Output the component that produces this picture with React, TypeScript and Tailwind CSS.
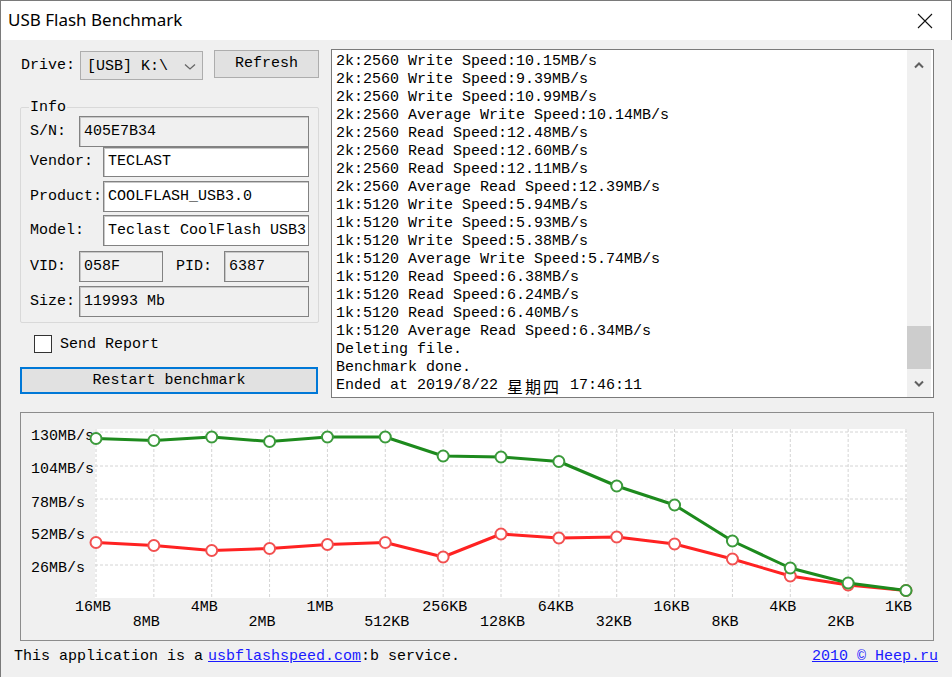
import React from "react";

const LOG = [
  "2k:2560 Write Speed:10.15MB/s",
  "2k:2560 Write Speed:9.39MB/s",
  "2k:2560 Write Speed:10.99MB/s",
  "2k:2560 Average Write Speed:10.14MB/s",
  "2k:2560 Read Speed:12.48MB/s",
  "2k:2560 Read Speed:12.60MB/s",
  "2k:2560 Read Speed:12.11MB/s",
  "2k:2560 Average Read Speed:12.39MB/s",
  "1k:5120 Write Speed:5.94MB/s",
  "1k:5120 Write Speed:5.93MB/s",
  "1k:5120 Write Speed:5.38MB/s",
  "1k:5120 Average Write Speed:5.74MB/s",
  "1k:5120 Read Speed:6.38MB/s",
  "1k:5120 Read Speed:6.24MB/s",
  "1k:5120 Read Speed:6.40MB/s",
  "1k:5120 Average Read Speed:6.34MB/s",
  "Deleting file.",
  "Benchmark done.",
];

const SIZES = ["16MB", "8MB", "4MB", "2MB", "1MB", "512KB", "256KB", "128KB", "64KB", "32KB", "16KB", "8KB", "4KB", "2KB", "1KB"];
const WRITE_Y = [542.5, 545.5, 550.5, 548.5, 544.5, 542.5, 557, 534, 538, 537, 544, 559, 576, 585, 590.5];
const READ_Y = [438.5, 440.5, 437, 441.5, 437, 437, 456, 457, 461.5, 486, 505, 541, 568, 583, 590.5];
const GRID_Y = [432, 466, 499, 532, 565];
const Y_LABELS = [
  { t: "130MB/s", y: 440 },
  { t: "104MB/s", y: 473 },
  { t: "78MB/s", y: 507 },
  { t: "52MB/s", y: 539 },
  { t: "26MB/s", y: 572 },
];

const colX = (i: number) => 96 + i * (810 / 14);

function Field({ label, value, labelW, white, className = "" }: { label: string; value: string; labelW: string; white?: boolean; className?: string }) {
  return (
    <div className={`flex items-center min-w-0 ${className}`}>
      <div className={`${labelW} shrink-0`}>{label}</div>
      <div
        className={`flex-1 min-w-0 h-full flex items-center pl-[4px] border border-[#828282] shadow-[inset_1px_1px_0_#c8c8c8] overflow-hidden whitespace-nowrap ${white ? "bg-white" : "bg-[#f0f0f0]"}`}
      >
        {value}
      </div>
    </div>
  );
}

function Chart() {
  const line = (ys: number[]) => ys.map((y, i) => `${colX(i).toFixed(1)},${y}`).join(" ");
  return (
    <svg width={912} height={227} viewBox="21 413 912 227" className="block">
      <rect x={95} y={429} width={812} height={169} fill="#ffffff" />
      {SIZES.map((_, i) => (
        <line key={i} x1={colX(i)} x2={colX(i)} y1={429} y2={598} stroke="#d4d4d4" strokeDasharray="3 2" />
      ))}
      {GRID_Y.map((y) => (
        <line key={y} x1={95} x2={907} y1={y} y2={y} stroke="#d4d4d4" strokeDasharray="3 2" />
      ))}
      <g fontFamily="'Liberation Mono', monospace" fontSize={15} fill="#000">
        {Y_LABELS.map((l) => (
          <text key={l.t} x={31} y={l.y}>
            {l.t}
          </text>
        ))}
        {SIZES.map((s, i) => (
          <text key={s} x={colX(i) - 21} y={i % 2 === 0 ? 611 : 626}>
            {s}
          </text>
        ))}
      </g>
      <polyline points={line(WRITE_Y)} fill="none" stroke="#ff2222" strokeWidth={3} strokeLinejoin="round" />
      {WRITE_Y.map((y, i) => (
        <circle key={i} cx={colX(i)} cy={y} r={5.5} fill="#fff" stroke="#f25050" strokeWidth={2} />
      ))}
      <polyline points={line(READ_Y)} fill="none" stroke="#1d8a1d" strokeWidth={3} strokeLinejoin="round" />
      {READ_Y.map((y, i) => (
        <circle key={i} cx={colX(i)} cy={y} r={5.5} fill="#fff" stroke="#3b9a3b" strokeWidth={2} />
      ))}
    </svg>
  );
}

export default function App() {
  return (
    <div className="w-[952px] h-[677px] overflow-hidden bg-[#f0f0f0] border-l border-t border-[#7a7a7a] flex flex-col text-[15px] leading-[18px] text-black font-['Liberation_Mono','Noto_Sans_CJK_SC',monospace]">
      {/* Title bar */}
      <div className="h-[39px] shrink-0 bg-white border-r border-[#7a7a7a] flex items-center justify-between pl-[7px] pr-[18px]">
        <span className="font-['Noto_Sans',sans-serif] text-[17px] pb-[2px]">USB Flash Benchmark</span>
        <svg width="16" height="16" viewBox="0 0 16 16">
          <path d="M1 1 L15 15 M15 1 L1 15" stroke="#111" strokeWidth="1.1" />
        </svg>
      </div>

      {/* Top section */}
      <div className="flex items-start ml-[19px] mt-[9px]">
        <div className="w-[299px] flex flex-col">
          <div className="flex items-start h-[30px]">
            <div className="w-[60px] pl-[1px] pt-[8px]">Drive:</div>
            <div className="w-[123px] h-[29px] mt-[2px] pt-[2px] bg-[#e5e5e5] border border-[#adadad] flex items-center justify-between pl-[6px] pr-[6px]">
              <span>[USB] K:\</span>
              <svg width="12" height="8" viewBox="0 0 12 8">
                <path d="M1 1.5 L6 6 L11 1.5" fill="none" stroke="#666" strokeWidth="1.3" />
              </svg>
            </div>
            <button className="ml-[11px] w-[105px] h-[28px] mt-[1px] bg-[#e1e1e1] border border-[#adadad] flex items-center justify-center">
              Refresh
            </button>
          </div>

          <fieldset className="mt-[20px] h-[224px] min-w-0 w-[299px] border border-[#d9d9d9] rounded-[2px] pl-[9px] pr-[9px] flex flex-col">
            <legend className="px-[1px] -ml-[1px] leading-[17px]">Info</legend>
            <Field label="S/N:" value="405E7B34" labelW="w-[49px]" className="h-[31px]" />
            <Field label="Vendor:" value="TECLAST" labelW="w-[73px]" white className="h-[30px]" />
            <Field label="Product:" value="COOLFLASH_USB3.0" labelW="w-[73px]" white className="h-[31px] mt-[4px]" />
            <Field label="Model:" value="Teclast CoolFlash USB3" labelW="w-[73px]" white className="h-[31px] mt-[3px]" />
            <div className="flex h-[31px] mt-[5px] min-w-0">
              <Field label="VID:" value="058F" labelW="w-[49px]" className="w-[133px] shrink-0" />
              <Field label="PID:" value="6387" labelW="w-[48px]" className="ml-[13px] flex-1" />
            </div>
            <Field label="Size:" value="119993 Mb" labelW="w-[49px]" className="h-[31px] mt-[4px]" />
          </fieldset>

          <div className="flex items-center mt-[12px] ml-[14px] h-[18px]">
            <div className="w-[18px] h-[18px] bg-white border border-[#333]" />
            <span className="ml-[8px] pt-[2px]">Send Report</span>
          </div>

          <button className="mt-[14px] w-[298px] h-[27px] bg-[#e1e1e1] border-2 border-[#0078d7] flex items-center justify-center">
            Restart benchmark
          </button>
        </div>

        {/* Log */}
        <div className="ml-[12px] w-[603px] h-[349px] bg-white border border-[#7a7a7a] flex">
          <div className="flex-1 pl-[4px] pt-[3px] whitespace-pre overflow-hidden">
            {LOG.map((l, i) => (
              <div key={i} className="h-[18px]">{l}</div>
            ))}
            <div className="h-[18px] flex items-center">
              <span>Ended at 2019/8/22 </span>
              <span className="text-[16px] leading-[16px] tracking-[2px] font-['Noto_Sans_CJK_SC',sans-serif]">星期四</span>
              <span> 17:46:11</span>
            </div>
          </div>
          <div className="w-[24px] mr-[2px] bg-[#f0f0f0] flex flex-col">
            <div className="h-[30px] flex items-center justify-center">
              <svg width="10" height="7" viewBox="0 0 10 7">
                <path d="M1 5.5 L5 1.5 L9 5.5" fill="none" stroke="#606060" strokeWidth="2" />
              </svg>
            </div>
            <div className="flex-1 flex flex-col justify-end">
              <div className="h-[43px] bg-[#cdcdcd]" />
            </div>
            <div className="h-[28px] flex items-center justify-center">
              <svg width="10" height="7" viewBox="0 0 10 7">
                <path d="M1 1.5 L5 5.5 L9 1.5" fill="none" stroke="#606060" strokeWidth="2" />
              </svg>
            </div>
          </div>
        </div>
      </div>

      {/* Chart */}
      <div className="ml-[19px] mt-[14px] w-[914px] h-[229px] border border-[#8c8c8c] bg-[#f0f0f0]">
        <Chart />
      </div>

      {/* Footer */}
      <div className="flex justify-between pl-[13px] pr-[14px] mt-[7px] whitespace-pre">
        <div>
          This application is a<span className="ml-[5px] text-[#1a1aff] underline">usbflashspeed.com</span>:b service.
        </div>
        <span className="text-[#1a1aff] underline">2010 © Heep.ru</span>
      </div>
    </div>
  );
}
